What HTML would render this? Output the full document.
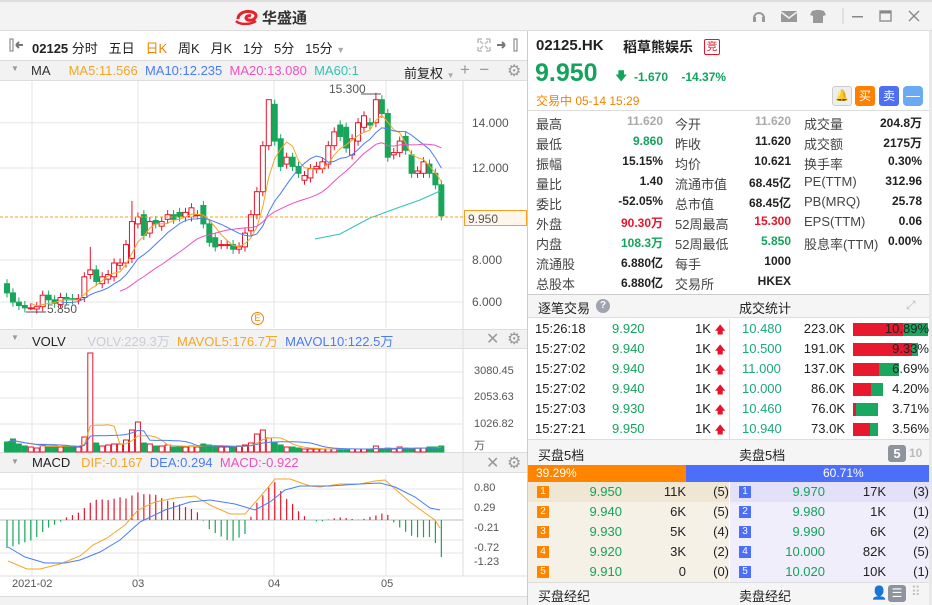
<!DOCTYPE html><html><head><meta charset="utf-8"><style>
*{margin:0;padding:0;box-sizing:border-box}
body{width:932px;height:605px;overflow:hidden;background:#fff;font-family:"Liberation Sans","Noto Sans CJK SC",sans-serif;font-size:12px;color:#222;position:relative}
.a{position:absolute;white-space:nowrap}
.g{color:#13a35c}.r{color:#e8132a}.gr{color:#aaa}
.b{font-weight:bold}
.rt{text-align:right}
</style></head><body>
<div class="a" style="left:0;top:0;width:932px;height:2px;background:#ddd"></div>
<div class="a" style="left:0;top:2px;width:932px;height:29px;background:#f3f3f3;border-bottom:1px solid #ddd"></div>
<svg class="a" style="left:235px;top:7px" width="26" height="18" viewBox="0 0 26 18"><path d="M3 12c0-6 8-9 14-7 4 1 5 4 3 6-2 3-8 3-9 0 0-2 3-3 5-2" fill="none" stroke="#e8202a" stroke-width="3"/><path d="M1 14c4 4 14 4 20 0" fill="none" stroke="#e8202a" stroke-width="2.5"/></svg>
<div class="a b" style="left:262px;top:7px;font-size:15px;color:#333">华盛通</div>
<svg class="a" style="left:750px;top:8px" width="180" height="16">
<path d="M4 10a5 5 0 1 1 10 0" fill="none" stroke="#999" stroke-width="2"/><rect x="3" y="9" width="3" height="5" fill="#999"/><rect x="12" y="9" width="3" height="5" fill="#999"/>
<rect x="31" y="3" width="16" height="11" fill="#999"/><path d="M31 4l8 6 8-6" stroke="#f3f3f3" stroke-width="1.5" fill="none"/>
<path d="M62 3l4-1h4l4 1 2 4-3 1v7h-10v-7l-3-1z" fill="#999"/>
<line x1="93" y1="0" x2="93" y2="16" stroke="#ccc"/>
<rect x="102" y="8" width="11" height="1.5" fill="#888"/>
<rect x="130" y="3" width="11" height="10" fill="none" stroke="#888" stroke-width="1.3"/><rect x="130" y="3" width="11" height="2.5" fill="#888"/>
<path d="M159 3l10 10M169 3l-10 10" stroke="#888" stroke-width="1.4"/></svg>
<div class="a" style="left:0;top:31px;width:527px;height:30px;background:#fff;border-bottom:1px solid #ddd"></div>
<svg class="a" style="left:9px;top:38px" width="16" height="14"><rect x="1" y="1" width="3" height="12" fill="none" stroke="#777"/><path d="M7 7h7M7 7l3-3M7 7l3 3" stroke="#777" stroke-width="2" fill="none"/></svg>
<div class="a" style="left:32px;top:38px;font-size:13px"><b>02125</b>&nbsp;分时&nbsp;&nbsp;&nbsp;五日&nbsp;&nbsp;&nbsp;<span style="color:#f08300">日K</span>&nbsp;&nbsp;&nbsp;周K&nbsp;&nbsp;&nbsp;月K&nbsp;&nbsp;&nbsp;1分&nbsp;&nbsp;&nbsp;5分&nbsp;&nbsp;&nbsp;15分 <span style="color:#aaa;font-size:9px">▼</span></div>
<svg class="a" style="left:477px;top:38px" width="46" height="14"><path d="M1 1h4M1 1v4M13 1h-4M13 1v4M1 13h4M1 13v-4M13 13h-4M13 13v-4M3 3l3 3M11 3l-3 3M3 11l3-3M11 11l-3-3" stroke="#bbb" stroke-width="1.5" fill="none"/><path d="M20 7h8M28 7l-3-3M28 7l-3 3" stroke="#777" stroke-width="2" fill="none"/><rect x="37" y="1" width="3" height="12" fill="none" stroke="#777"/></svg>
<div class="a" style="left:0;top:61px;width:527px;height:20px;background:#f2f2f2;border-bottom:1px solid #ddd"></div>
<div class="a" style="left:11px;top:64px;font-size:8px;color:#999">▼</div>
<div class="a" style="left:31px;top:63px;font-size:13px"><span style="color:#333">MA</span>&nbsp;&nbsp;&nbsp;&nbsp;&nbsp;<span style="color:#f5a623">MA5:11.566</span>&nbsp;&nbsp;<span style="color:#4a7cf7">MA10:12.235</span>&nbsp;&nbsp;<span style="color:#f050c0">MA20:13.080</span>&nbsp;&nbsp;<span style="color:#2ec4b6">MA60:1</span></div>
<div class="a" style="left:404px;top:63px;font-size:13px">前复权 <span style="color:#aaa;font-size:8px">▼</span></div>
<div class="a" style="left:460px;top:60px;font-size:17px;color:#999">+&nbsp;&nbsp;−</div>
<div class="a" style="left:507px;top:61px;font-size:16px;color:#999">⚙</div>
<div class="a" style="left:0;top:329px;width:527px;height:20px;background:#f2f2f2;border-top:1px solid #ddd;border-bottom:1px solid #ddd"></div>
<div class="a" style="left:11px;top:333px;font-size:8px;color:#999">▼</div>
<div class="a" style="left:32px;top:331px;font-size:13px"><span>VOLV</span>&nbsp;&nbsp;&nbsp;&nbsp;&nbsp;&nbsp;<span style="color:#c8ccd8">VOLV:229.3万</span>&nbsp;&nbsp;<span style="color:#f5a623">MAVOL5:176.7万</span>&nbsp;&nbsp;<span style="color:#4a7cf7">MAVOL10:122.5万</span></div>
<div class="a" style="left:486px;top:329px;font-size:16px;color:#999">✕</div><div class="a" style="left:507px;top:329px;font-size:16px;color:#999">⚙</div>
<div class="a" style="left:0;top:452px;width:527px;height:21px;background:#f2f2f2;border-top:1px solid #ddd;border-bottom:1px solid #ddd"></div>
<div class="a" style="left:11px;top:457px;font-size:8px;color:#999">▼</div>
<div class="a" style="left:32px;top:455px;font-size:13px"><span>MACD</span>&nbsp;&nbsp;&nbsp;<span style="color:#f5a623">DIF:-0.167</span>&nbsp;&nbsp;<span style="color:#4a7cf7">DEA:0.294</span>&nbsp;&nbsp;<span style="color:#f050c0">MACD:-0.922</span></div>
<div class="a" style="left:486px;top:453px;font-size:16px;color:#999">✕</div><div class="a" style="left:507px;top:453px;font-size:16px;color:#999">⚙</div>
<svg id="ch" class="a" style="left:0;top:0" width="527" height="605"></svg>
<div class="a" style="left:472px;top:116px;color:#555">14.000</div>
<div class="a" style="left:472px;top:161px;color:#555">12.000</div>
<div class="a" style="left:464px;top:210px;width:63px;height:16px;border:1px solid #f5a020;background:#fff5ea;color:#555;padding:1px 3px">9.950</div>
<div class="a" style="left:472px;top:253px;color:#555">8.000</div>
<div class="a" style="left:472px;top:295px;color:#555">6.000</div>
<div class="a" style="left:329px;top:82px;color:#555">15.300</div>
<div class="a" style="left:47px;top:302px;color:#555">5.850</div>
<div class="a" style="left:251px;top:312px;width:13px;height:13px;border:1px solid #f08300;border-radius:50%;color:#f08300;font-size:9px;text-align:center;line-height:11px">E</div>
<div class="a" style="left:474px;top:365px;color:#555;font-size:11px">3080.45</div>
<div class="a" style="left:474px;top:391px;color:#555;font-size:11px">2053.63</div>
<div class="a" style="left:474px;top:418px;color:#555;font-size:11px">1026.82</div>
<div class="a" style="left:474px;top:437px;color:#555;font-size:11px">万</div>
<div class="a" style="left:474px;top:482px;color:#555;font-size:11px">0.80</div>
<div class="a" style="left:474px;top:502px;color:#555;font-size:11px">0.29</div>
<div class="a" style="left:474px;top:522px;color:#555;font-size:11px">-0.21</div>
<div class="a" style="left:474px;top:542px;color:#555;font-size:11px">-0.72</div>
<div class="a" style="left:474px;top:556px;color:#555;font-size:11px">-1.23</div>
<div class="a" style="left:12px;top:578px;color:#555;font-size:11px">2021-02</div>
<div class="a" style="left:132px;top:578px;color:#555;font-size:11px">03</div>
<div class="a" style="left:268px;top:578px;color:#555;font-size:11px">04</div>
<div class="a" style="left:381px;top:578px;color:#555;font-size:11px">05</div>
<div class="a" style="left:0;top:596px;width:527px;height:9px;background:#f2f2f2;border-top:1px solid #ddd"></div>
<div class="a" style="left:527px;top:31px;width:1px;height:574px;background:#ccc"></div>
<div class="a" style="left:929px;top:31px;width:3px;height:574px;background:#e8e8e8"></div>
<div class="a b" style="left:536px;top:37px;font-size:15px">02125.HK</div>
<div class="a b" style="left:623px;top:37px;font-size:14px">稻草熊娱乐</div>
<div class="a" style="left:704px;top:39px;width:16px;height:16px;border:1px solid #e8132a;color:#e8132a;font-size:11px;text-align:center;line-height:14px;border-radius:2px">竞</div>
<div class="a b g" style="left:535px;top:59px;font-size:25px">9.950</div>
<div class="a g" style="left:615px;top:67px;font-size:12px">🡇</div>
<div class="a b g" style="left:634px;top:70px;font-size:12px">-1.670&nbsp;&nbsp;&nbsp;&nbsp;-14.37%</div>
<div class="a" style="left:536px;top:92px;font-size:12px;color:#f08300">交易中 05-14 15:29</div>
<div class="a" style="left:832px;top:86px;width:20px;height:20px;border:1px solid #ccc;background:#eee;border-radius:3px;color:#999;text-align:center;font-size:11px;line-height:18px">🔔</div>
<div class="a" style="left:855px;top:86px;width:20px;height:20px;background:#ff8000;border-radius:3px;color:#fff;text-align:center;font-size:12px;line-height:20px">买</div>
<div class="a" style="left:879px;top:86px;width:20px;height:20px;background:#4d6ef5;border-radius:3px;color:#fff;text-align:center;font-size:12px;line-height:20px">卖</div>
<div class="a" style="left:903px;top:86px;width:20px;height:20px;background:#6aaaf5;border-radius:4px;color:#fff;text-align:center;font-size:14px;line-height:19px">—</div>
<div class="a" style="left:528px;top:110px;width:401px;height:1px;background:#ddd"></div>
<div id="st"></div>
<div class="a" style="left:528px;top:294px;width:401px;height:1px;background:#ccc"></div>
<div class="a" style="left:528px;top:295px;width:401px;height:23px;background:#f5f5f5;border-bottom:1px solid #ddd"></div>
<div class="a" style="left:538px;top:298px;font-size:13px">逐笔交易</div>
<div class="a" style="left:596px;top:299px;width:14px;height:14px;border-radius:50%;background:#a0a4ae;color:#fff;font-size:10px;text-align:center;line-height:14px;font-weight:bold">?</div>
<div class="a" style="left:739px;top:298px;font-size:13px">成交统计</div>
<div class="a" style="left:906px;top:298px;font-size:12px;color:#bbb">⤢</div>
<div class="a" style="left:729px;top:319px;width:1px;height:120px;background:#ddd"></div>
<div id="tr"></div>
<div class="a" style="left:528px;top:439px;width:401px;height:26px;background:#f5f5f5;border-top:1px solid #ddd"></div>
<div class="a" style="left:538px;top:445px;font-size:13px">买盘5档</div>
<div class="a" style="left:739px;top:445px;font-size:13px">卖盘5档</div>
<div class="a b" style="left:888px;top:445px;width:18px;height:17px;background:#8e949e;color:#fff;border-radius:3px;text-align:center;font-size:13px;line-height:17px">5</div>
<div class="a b" style="left:909px;top:446px;color:#bbb;font-size:12px">10</div>
<div class="a" style="left:528px;top:465px;width:158px;height:17px;background:#ff8500;color:#fff;font-size:12px;padding:1px 0 0 8px">39.29%</div>
<div class="a" style="left:686px;top:465px;width:243px;height:17px;background:#4d6ef7;color:#fff;font-size:12px;padding:1px 0 0 137px">60.71%</div>
<div class="a" style="left:528px;top:482px;width:201px;height:100px;background:#f6f1e7"></div>
<div class="a" style="left:528px;top:482px;width:201px;height:20px;background:#efe6d4"></div>
<div class="a" style="left:730px;top:482px;width:199px;height:100px;background:#efeefa"></div>
<div class="a" style="left:730px;top:482px;width:199px;height:20px;background:#e3e1f8"></div>
<div id="ob"></div>
<div class="a" style="left:528px;top:582px;width:401px;height:23px;background:#f5f5f5;border-top:1px solid #ddd"></div>
<div class="a" style="left:538px;top:586px;font-size:13px">买盘经纪</div>
<div class="a" style="left:739px;top:586px;font-size:13px">卖盘经纪</div>
<div class="a" style="left:871px;top:585px;color:#bbb;font-size:13px">👤</div>
<div class="a" style="left:888px;top:585px;width:18px;height:17px;background:#8e949e;border-radius:3px;color:#fff;font-size:12px;text-align:center;line-height:17px">☰</div>
<div class="a" style="left:911px;top:584px;color:#bbb;font-size:13px">⠿</div>
<script>
var ns="http://www.w3.org/2000/svg",S=document.getElementById('ch');
function el(t,a){var e=document.createElementNS(ns,t);for(var k in a)e.setAttribute(k,a[k]);S.appendChild(e);return e}
[122.7,168,260,302,372,398,424,489,509,540,553].forEach(function(y){el('line',{x1:0,x2:463,y1:y,y2:y,stroke:'#e6e6e6'})});
[32,138,274,386].forEach(function(x){el('line',{x1:x,x2:x,y1:81,y2:328,stroke:'#e6e6e6'});el('line',{x1:x,x2:x,y1:350,y2:452,stroke:'#e6e6e6'});el('line',{x1:x,x2:x,y1:474,y2:576,stroke:'#e6e6e6'})});
el('line',{x1:463,x2:463,y1:81,y2:576,stroke:'#ddd'});
el('line',{x1:0,x2:527,y1:576,y2:576,stroke:'#ddd'});
el('line',{x1:0,x2:463,y1:520,y2:520,stroke:'#bbb'});
var D=[[7,6.6],[6.6,6.2],[6.2,6.05],[6.05,5.95],[5.95,5.95],[5.9,6.0],[6.0,6.5],[6.5,6.3],[6.3,6.15],[6.1,6.4],[6.4,6.3],[6.35,6.3],[6.3,6.35],[6.4,7.3],[7.4,7.6],[7.6,7.1],[7.0,7.3],[7.2,7.4],[7.3,7.9],[7.8,7.9],[7.9,8.7],[8.1,9.7],[9.6,9.9],[10.0,9.1],[9.2,9.7],[9.75,9.6],[9.5,9.7],[9.8,10],[10.0,9.8],[10.1,9.9],[9.9,10.1],[9.9,10.3],[10.0,10.0],[10.4,9.6],[9.6,8.8],[9.0,8.6],[8.7,8.7],[8.7,8.7],[8.7,8.5],[8.5,8.6],[8.6,9.2],[9.3,10.0],[10.0,11.0],[11.0,13.0],[13.0,15.0],[14.8,13.2],[13.3,12.1],[12.2,12.5],[12.5,12.1],[12.1,11.8],[11.5,11.7],[11.6,12.0],[12.0,12.1],[12.0,12.3],[12.2,13.0],[13.0,13.6],[13.9,13.4],[13.8,12.9],[12.6,13.3],[13.2,14.0],[13.8,14.3],[14.0,13.9],[14.0,15.0],[15.0,14.4],[14.4,12.5],[12.6,12.7],[12.7,13.2],[13.4,12.8],[12.6,11.8],[11.8,11.9],[11.8,12.3],[12.2,11.8],[11.8,11.3],[11.3,9.95]];
function Y(p){return 122.7+(14-p)*23}
function X(i){return 7+i*5.95}
var R='#e8132a',G='#17a65a';
var vh=[10,13,8,6,5,4,7,6,6,5,6,6,5,15,99,9,6,7,8,8,12,22,30,9,8,6,6,7,5,6,5,6,5,8,7,6,5,5,5,6,7,9,18,22,14,9,7,5,5,4,3,3,3,3,3,3,3,3,3,3,3,3,6,3,4,3,5,4,3,4,4,5,5,6];
D.forEach(function(d,i){var o=d[0],c=d[1],up=c>=o,col=up?R:G,x=X(i);var hi=Math.max(o,c)+0.2,lo=Math.min(o,c)-0.2;
if(i==14)hi=8.6;if(i==21)hi=10.6;if(i==44)hi=15.0;if(i==62)hi=15.3;if(i==4)lo=5.85;
el('line',{x1:x,x2:x,y1:Y(hi),y2:Y(lo),stroke:col});
var yt=Y(Math.max(o,c)),h=Math.max(1,Y(Math.min(o,c))-yt);
el('rect',{x:x-2.5,y:yt,width:5,height:h,fill:up?'#fff':col,stroke:col,'stroke-width':1});
var v=vh[i]||4;el('rect',{x:x-2.5,y:452-v,width:5,height:v,fill:up?'#fff':col,stroke:col});
});
var cl=D.map(function(d){return d[1]});
function ma(n,col){var p=[];for(var i=n-1;i<cl.length;i++){var s=0;for(var j=0;j<n;j++)s+=cl[i-j];p.push(X(i)+','+Y(s/n))}el('polyline',{points:p.join(' '),fill:'none',stroke:col})}
ma(5,'#f5a623');ma(10,'#4a7cf7');ma(20,'#f050c0');
el('polyline',{points:'315,239 340,234 370,218 400,207 420,200 440,191',fill:'none',stroke:'#2ec4b6'});
el('line',{x1:0,x2:463,y1:217,y2:217,stroke:'#f5a020','stroke-dasharray':'3,2'});
el('line',{x1:361,x2:381,y1:94,y2:94,stroke:'#555'});el('line',{x1:26,x2:46,y1:312,y2:312,stroke:'#555'});
function vma(n,col){var p=[];for(var i=0;i<vh.length;i++){var s=0,k=0;for(var j=0;j<n&&i-j>=0;j++){s+=vh[i-j];k++}p.push(X(i)+','+(452-s/k))}el('polyline',{points:p.join(' '),fill:'none',stroke:col})}
vma(5,'#f5a623');vma(10,'#4a7cf7');
// MACD via traced points
var DF=[[8,561],[27,569],[40,569],[60,564],[80,556],[93,545],[107,538],[125,525],[138,510],[155,502],[175,498],[195,496],[210,505],[230,514],[245,514],[265,491],[275,479],[290,479],[310,486],[320,487],[340,484],[360,484],[375,481],[385,480],[395,489],[410,502],[425,513],[435,520],[440,528]];
var DE=[[8,547],[25,557],[45,563],[65,563],[80,560],[100,552],[120,540],[140,522],[165,510],[190,502],[210,500],[235,504],[255,510],[270,502],[285,490],[300,486],[330,486],[360,484],[380,483],[395,487],[415,497],[430,508],[440,510]];
function itp(P,x){if(x<=P[0][0])return P[0][1];for(var i=1;i<P.length;i++){if(x<=P[i][0]){var a=P[i-1],b=P[i];return a[1]+(b[1]-a[1])*(x-a[0])/(b[0]-a[0])}}return P[P.length-1][1]}
for(var i=0;i<74;i++){var x=X(i),h=(itp(DE,x)-itp(DF,x))*2;if(i==73)h=-37;
el('line',{x1:x,x2:x,y1:520,y2:520-h,stroke:h>=0?R:G,'stroke-width':1.2})}
el('polyline',{points:DF.map(function(p){return p.join(',')}).join(' '),fill:'none',stroke:'#f5a623'});
el('polyline',{points:DE.map(function(p){return p.join(',')}).join(' '),fill:'none',stroke:'#4a7cf7'});
var st=[["最高","11.620","gr","今开","11.620","gr","成交量","204.8万",""],["最低","9.860","g","昨收","11.620","","成交额","2175万",""],["振幅","15.15%","","均价","10.621","","换手率","0.30%",""],["量比","1.40","","流通市值","68.45亿","","PE(TTM)","312.96",""],["委比","-52.05%","","总市值","68.45亿","","PB(MRQ)","25.78",""],["外盘","90.30万","r","52周最高","15.300","r","EPS(TTM)","0.06",""],["内盘","108.3万","g","52周最低","5.850","g","股息率(TTM)","0.00%",""],["流通股","6.880亿","","每手","1000","","",""],["总股本","6.880亿","","交易所","HKEX","","",""]];
var h='';st.forEach(function(r,i){var y=114+i*20;
h+='<div class="a" style="left:536px;top:'+y+'px;font-size:13px;color:#444">'+r[0]+'</div><div class="a b rt '+r[2]+'" style="right:269px;top:'+y+'px;font-size:12px">'+r[1]+'</div>';
h+='<div class="a" style="left:675px;top:'+y+'px;font-size:13px;color:#444">'+r[3]+'</div><div class="a b rt '+r[5]+'" style="right:141px;top:'+y+'px;font-size:12px">'+r[4]+'</div>';
if(r[6])h+='<div class="a" style="left:804px;top:'+y+'px;font-size:13px;color:#444">'+r[6]+'</div><div class="a b rt" style="right:10px;top:'+y+'px;font-size:12px">'+r[7]+'</div>';});
document.getElementById('st').innerHTML=h;
var tr=[["15:26:18","9.920","10.480","223.0K","10.89%",50,25],["15:27:02","9.940","10.500","191.0K","9.33%",59,6],["15:27:02","9.940","11.000","137.0K","6.69%",26,20],["15:27:02","9.940","10.000","86.0K","4.20%",18,12],["15:27:03","9.930","10.460","76.0K","3.71%",3,22],["15:27:21","9.950","10.940","73.0K","3.56%",17,8]];
h='';tr.forEach(function(r,i){var y=321+i*20;
h+='<div class="a" style="left:535px;top:'+y+'px;font-size:13px">'+r[0]+'</div><div class="a g" style="left:612px;top:'+y+'px;font-size:13px">'+r[1]+'</div><div class="a" style="left:695px;top:'+y+'px;font-size:13px">1K <span class="r" style="font-size:11px">🡅</span></div>';
h+='<div class="a" style="left:742px;top:'+y+'px;font-size:13px;color:#1aa87a">'+r[2]+'</div><div class="a rt" style="right:87px;top:'+y+'px;font-size:13px">'+r[3]+'</div>';
var rw=Math.min(r[5],75),gw=Math.min(r[6],75-rw);
h+='<div class="a" style="left:853px;top:'+(y+2)+'px;width:'+rw+'px;height:13px;background:#e8192f"></div><div class="a" style="left:'+(853+rw)+'px;top:'+(y+2)+'px;width:'+gw+'px;height:13px;background:#1aa860"></div>';
h+='<div class="a rt" style="right:3px;top:'+y+'px;font-size:13px">'+r[4]+'</div>';});
document.getElementById('tr').innerHTML=h;
var ob=[["9.950","11K","(5)","9.970","17K","(3)"],["9.940","6K","(5)","9.980","1K","(1)"],["9.930","5K","(4)","9.990","6K","(2)"],["9.920","3K","(2)","10.000","82K","(5)"],["9.910","0","(0)","10.020","10K","(1)"]];
h='';ob.forEach(function(r,i){var y=484+i*20;
h+='<div class="a" style="left:537px;top:'+(y+2)+'px;width:12px;height:12px;background:#ff8500;color:#fff;font-size:10px;text-align:center;line-height:12px">'+(i+1)+'</div>';
h+='<div class="a g rt" style="right:310px;top:'+y+'px;font-size:13px">'+r[0]+'</div><div class="a rt" style="right:246px;top:'+y+'px;font-size:13px">'+r[1]+'</div><div class="a rt" style="right:203px;top:'+y+'px;font-size:13px">'+r[2]+'</div>';
h+='<div class="a" style="left:739px;top:'+(y+2)+'px;width:12px;height:12px;background:#4d6ef7;color:#fff;font-size:10px;text-align:center;line-height:12px">'+(i+1)+'</div>';
h+='<div class="a g rt" style="right:107px;top:'+y+'px;font-size:13px">'+r[3]+'</div><div class="a rt" style="right:46px;top:'+y+'px;font-size:13px">'+r[4]+'</div><div class="a rt" style="right:3px;top:'+y+'px;font-size:13px">'+r[5]+'</div>';});
document.getElementById('ob').innerHTML=h;
</script>
</body></html>
